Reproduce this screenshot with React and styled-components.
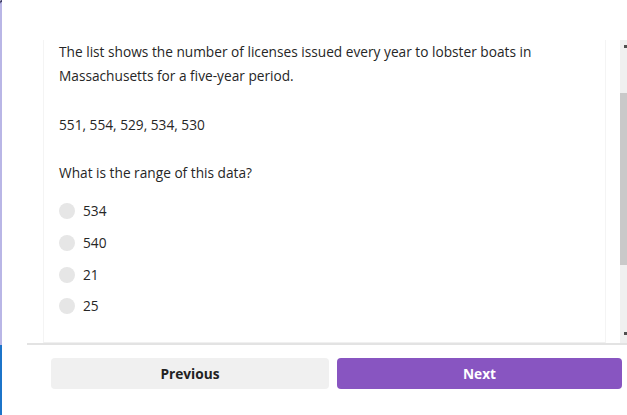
import React from "react";
import styled, { createGlobalStyle } from "styled-components";

const GlobalStyle = createGlobalStyle`
  body {
    margin      : 0 ;
    background  : #ffffff ;
    font-family : "Open Sans", "Noto Sans", sans-serif ;
    color       : #262626 ;
  }
`;

const Page = styled.div`
  display  : flex ;
  width    : 627px ;
  height   : 415px ;
  overflow : hidden ;
`;

const EdgeStrip = styled.div`
  display        : flex ;
  flex-direction : column ;
  width          : 2px ;
  flex-shrink    : 0 ;
`;

const EdgeTop = styled.div`
  height                 : 345px ;
  background             : #b9b6e6 ;
  border-top-left-radius : 3px ;
  box-shadow             : inset 0 2px 0 #3a3a60 ;
`;

const EdgeBottom = styled.div`
  flex       : 1 ;
  background : #1c74c9 ;
`;

const Main = styled.div`
  flex           : 1 ;
  display        : flex ;
  flex-direction : column ;
`;

const ScrollArea = styled.div`
  display      : flex ;
  align-items  : stretch ;
  height       : 303px ;
  margin-top   : 40px ;
  padding-left : 41px ;
  gap          : 14px ;
`;

const Panel = styled.div`
  flex          : 1 ;
  border-left   : 1px solid #f4f4f4 ;
  border-right  : 1px solid #f4f4f4 ;
  border-bottom : 1px solid #f0f0f0 ;
  padding       : 0 15px ;
  font-size     : 13.7px ;
  line-height   : 24px ;
`;

const Para = styled.p`
  margin : 0 0 ${(p) => p.$gap || 25}px ;
`;

const Options = styled.div`
  display        : flex ;
  flex-direction : column ;
  gap            : 7.8px ;
  margin-top     : 3px ;
`;

const Option = styled.label`
  display     : flex ;
  align-items : center ;
  gap         : 8px ;
  height      : 24px ;
`;

const Radio = styled.span`
  width         : 16px ;
  height        : 16px ;
  border-radius : 50% ;
  background    : #e6e6e6 ;
`;

const Scrollbar = styled.div`
  position       : relative ;
  width          : 7px ;
  background     : #f0f0f0 ;
  display        : flex ;
  flex-direction : column ;
`;

const Thumb = styled.div`
  margin-top : 53px ;
  height     : 172px ;
  background : #c9c9c9 ;
`;

const Arrow = styled.span`
  position   : absolute ;
  right      : 0 ;
  width      : 3px ;
  height     : 3px ;
  background : #505050 ;
  ${(p) => (p.$bottom ? "bottom: 8px;" : "top: 5px;")}
`;

const Divider = styled.div`
  height      : 2px ;
  margin-left : 25px ;
  background  : #e3e3e3 ;
`;

const Footer = styled.div`
  display : flex ;
  gap     : 8px ;
  padding : 13px 5px 0 49px ;
`;

const Button = styled.button`
  height        : 31px ;
  border        : none ;
  border-radius : 4px ;
  font-family   : "Open Sans", "Noto Sans", sans-serif ;
  font-size     : 13.7px ;
  font-weight   : 700 ;
  cursor        : pointer ;
  width         : ${(p) => p.$width}px ;
  background    : ${(p) => (p.$primary ? "#8855c1" : "#f0f0f0")} ;
  color         : ${(p) => (p.$primary ? "#ffffff" : "#222222")} ;
`;

const answers = ["534", "540", "21", "25"];

export default function App() {
  return (
    <Page>
      <GlobalStyle />
      <EdgeStrip>
        <EdgeTop />
        <EdgeBottom />
      </EdgeStrip>
      <Main>
        <ScrollArea>
          <Panel>
            <Para>
              The list shows the number of licenses issued every year to lobster boats in
              <br />
              Massachusetts for a five-year period.
            </Para>
            <Para $gap={24}>551, 554, 529, 534, 530</Para>
            <Para $gap={14}>What is the range of this data?</Para>
            <Options>
              {answers.map((a) => (
                <Option key={a}>
                  <Radio />
                  {a}
                </Option>
              ))}
            </Options>
          </Panel>
          <Scrollbar>
            <Arrow />
            <Thumb />
            <Arrow $bottom />
          </Scrollbar>
        </ScrollArea>
        <Divider />
        <Footer>
          <Button $width={278}>Previous</Button>
          <Button $width={285} $primary>
            Next
          </Button>
        </Footer>
      </Main>
    </Page>
  );
}
